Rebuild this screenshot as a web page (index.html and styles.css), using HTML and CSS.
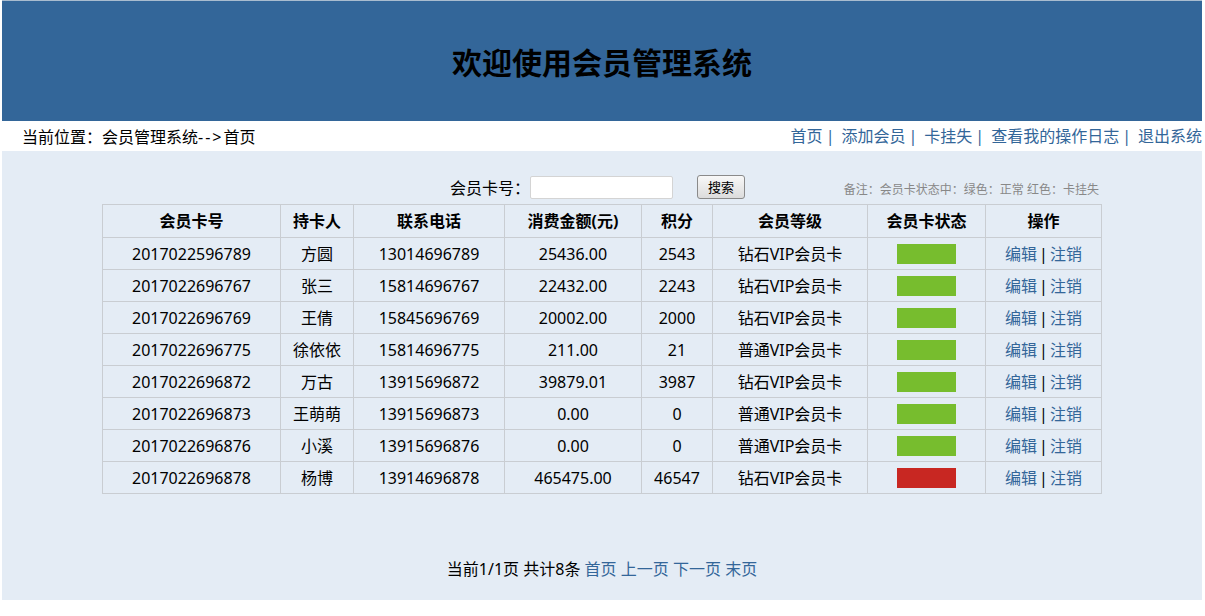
FILE: index.html
```html
<!DOCTYPE html>
<html lang="zh-CN">
<head>
<meta charset="utf-8">
<title>会员管理系统</title>
<link rel="stylesheet" href="styles.css">
</head>
<body>
<div class="page">
  <header class="top"><h1 class="title">欢迎使用会员管理系统</h1></header>
  <div class="crumb">
    <span class="where">当前位置<span class="cl">：</span>会员管理系统<span class="arrow">--&gt;</span>首页</span>
    <nav class="nav">
      <a href="#">首页</a><span class="sep">|</span>
      <a href="#">添加会员</a><span class="sep">|</span>
      <a href="#">卡挂失</a><span class="sep">|</span>
      <a href="#">查看我的操作日志</a><span class="sep">|</span>
      <a href="#">退出系统</a>
    </nav>
  </div>
  <main class="main">
    <div class="toolbar">
      <label class="lbl">会员卡号<span class="cl">：</span></label>
      <input class="field" type="text">
      <button class="btn" type="button">搜索</button>
      <span class="note">备注<span class="cl">：</span>会员卡状态中<span class="cl">：</span>绿色<span class="cl">：</span>正常 红色<span class="cl">：</span>卡挂失</span>
    </div>
    <table class="grid">
      <colgroup>
        <col class="c1"><col class="c2"><col class="c3"><col class="c4"><col class="c5"><col class="c6"><col class="c7"><col class="c8">
      </colgroup>
      <thead>
        <tr><th>会员卡号</th><th>持卡人</th><th>联系电话</th><th>消费金额(元)</th><th>积分</th><th>会员等级</th><th>会员卡状态</th><th>操作</th></tr>
      </thead>
      <tbody>
        <tr><td>2017022596789</td><td>方圆</td><td>13014696789</td><td>25436.00</td><td>2543</td><td>钻石VIP会员卡</td><td><span class="st ok"></span></td><td class="ops"><a href="#">编辑</a>|<a href="#">注销</a></td></tr>
        <tr><td>2017022696767</td><td>张三</td><td>15814696767</td><td>22432.00</td><td>2243</td><td>钻石VIP会员卡</td><td><span class="st ok"></span></td><td class="ops"><a href="#">编辑</a>|<a href="#">注销</a></td></tr>
        <tr><td>2017022696769</td><td>王倩</td><td>15845696769</td><td>20002.00</td><td>2000</td><td>钻石VIP会员卡</td><td><span class="st ok"></span></td><td class="ops"><a href="#">编辑</a>|<a href="#">注销</a></td></tr>
        <tr><td>2017022696775</td><td>徐依依</td><td>15814696775</td><td>211.00</td><td>21</td><td>普通VIP会员卡</td><td><span class="st ok"></span></td><td class="ops"><a href="#">编辑</a>|<a href="#">注销</a></td></tr>
        <tr><td>2017022696872</td><td>万古</td><td>13915696872</td><td>39879.01</td><td>3987</td><td>钻石VIP会员卡</td><td><span class="st ok"></span></td><td class="ops"><a href="#">编辑</a>|<a href="#">注销</a></td></tr>
        <tr><td>2017022696873</td><td>王萌萌</td><td>13915696873</td><td>0.00</td><td>0</td><td>普通VIP会员卡</td><td><span class="st ok"></span></td><td class="ops"><a href="#">编辑</a>|<a href="#">注销</a></td></tr>
        <tr><td>2017022696876</td><td>小溪</td><td>13915696876</td><td>0.00</td><td>0</td><td>普通VIP会员卡</td><td><span class="st ok"></span></td><td class="ops"><a href="#">编辑</a>|<a href="#">注销</a></td></tr>
        <tr><td>2017022696878</td><td>杨博</td><td>13914696878</td><td>465475.00</td><td>46547</td><td>钻石VIP会员卡</td><td><span class="st lost"></span></td><td class="ops"><a href="#">编辑</a>|<a href="#">注销</a></td></tr>
      </tbody>
    </table>
    <div class="pager">当前1/1页 共计8条 <a href="#">首页</a> <a href="#">上一页</a> <a href="#">下一页</a> <a href="#">末页</a></div>
  </main>
</div>
</body>
</html>
```
FILE: styles.css
```css
html, body {
  margin: 0;
  padding: 0;
  background: #ffffff;
}
body {
  font-family: "Noto Sans", "Noto Sans CJK SC", sans-serif;
  font-size: 16px;
  color: #000;
}
a {
  color: #336699;
  text-decoration: none;
}
.cl {
  font-family: "Noto Sans CJK TC", "Noto Sans CJK SC", sans-serif;
}
.arrow {
  letter-spacing: 2px;
}
.page {
  width: 1200px;
  margin-left: 2px;
}
.top {
  height: 120px;
  background: #336699;
  border-top: 1px solid #a9bccf;
  display: flex;
  align-items: center;
  justify-content: center;
}
.title {
  margin: 0;
  font-size: 30px;
  font-weight: bold;
  line-height: 1;
  color: #000;
  padding-top: 4px;
}
.crumb {
  height: 30px;
  display: flex;
  align-items: center;
  justify-content: space-between;
  padding-left: 20px;
  background: #fff;
}
.where {
  line-height: 20px;
}
.nav {
  display: flex;
  align-items: center;
  line-height: 20px;
}
.nav .sep {
  color: #336699;
  margin: 0 7px 0 3px;
}
.main {
  height: 449px;
  box-sizing: border-box;
  background: #e4ecf5;
  padding-top: 24px;
}
.toolbar {
  width: 999px;
  margin-left: 100px;
  height: 24px;
  display: flex;
  align-items: center;
  margin-bottom: 5px;
}
.lbl {
  margin-left: 348px;
  line-height: 20px;
}
.field {
  width: 143px;
  height: 23px;
  box-sizing: border-box;
  border: 1px solid #d4d4d4;
  border-radius: 2px;
  background: #fff;
  margin: 0;
  padding: 0 3px;
}
.btn {
  margin: 0 0 0 24px;
  width: 48px;
  height: 24px;
  box-sizing: border-box;
  border: 1px solid #8a8a8a;
  border-radius: 3px;
  background: linear-gradient(#f8f8f8, #dcdcdc);
  font-family: "Noto Sans", "Noto Sans CJK SC", sans-serif;
  font-size: 13px;
  color: #000;
  padding: 0;
  line-height: 20px;
}
.note {
  margin-left: auto;
  margin-right: 2px;
  margin-top: 4px;
  font-size: 12px;
  color: #888;
  line-height: 16px;
}
.grid {
  width: 999px;
  margin-left: 100px;
  border-collapse: collapse;
  table-layout: fixed;
}
.c1 { width: 178px; }
.c2 { width: 73px; }
.c3 { width: 151px; }
.c4 { width: 137px; }
.c5 { width: 71px; }
.c6 { width: 155px; }
.c7 { width: 118px; }
.c8 { width: 116px; }
.grid th, .grid td {
  border: 1px solid #c9cdd2;
  text-align: center;
  padding: 0;
  height: 31px;
  line-height: 20px;
}
.grid th {
  height: 32px;
  font-weight: bold;
}
.st {
  display: inline-block;
  width: 59px;
  height: 20px;
  vertical-align: middle;
}
.st.ok { background: #77bd2e; }
.st.lost { background: #c82722; }
.ops a {
  margin: 0 2px;
}
.pager {
  text-align: center;
  margin-top: 64px;
  line-height: 22px;
}
```
